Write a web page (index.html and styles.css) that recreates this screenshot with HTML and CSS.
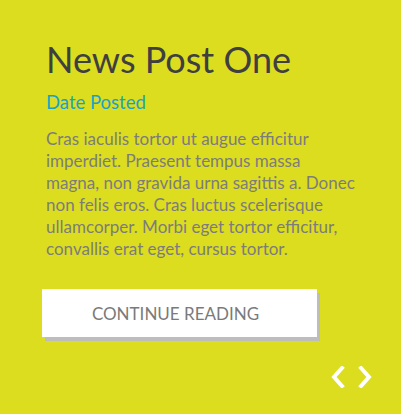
FILE: index.html
```html
<!DOCTYPE html>
<html>
<head>
<meta charset="utf-8">
<link rel="stylesheet" href="styles.css">
</head>
<body>
<div class="card">
  <h1 class="title">News Post One</h1>
  <div class="date">Date Posted</div>
  <p class="excerpt">Cras iaculis tortor ut augue efficitur imperdiet. Praesent tempus massa magna, non gravida urna sagittis a. Donec non felis eros. Cras luctus scelerisque ullamcorper. Morbi eget tortor efficitur, convallis erat eget, cursus tortor.</p>
  <a class="button" href="#">CONTINUE READING</a>
  <div class="nav">
    <svg class="chev" width="14" height="22" viewBox="0 0 14 22"><path d="M11 2 L3 11 L11 20" fill="none" stroke="#fff" stroke-width="4" stroke-linejoin="miter" stroke-linecap="square"/></svg>
    <svg class="chev" width="14" height="22" viewBox="0 0 14 22"><path d="M3 2 L11 11 L3 20" fill="none" stroke="#fff" stroke-width="4" stroke-linejoin="miter" stroke-linecap="square"/></svg>
  </div>
</div>
</body>
</html>
```
FILE: styles.css
```css
html, body {
  margin: 0;
  padding: 0;
  background: #dcdd1f;
}
.card {
  width: 401px;
  height: 414px;
  box-sizing: border-box;
  padding: 34px 0 0 46px;
  font-family: Lato, "Open Sans", sans-serif;
  display: flex;
  flex-direction: column;
  align-items: flex-start;
}
.title {
  margin: 0;
  font-size: 36px;
  font-weight: 400;
  line-height: 50px;
  color: #3f3f3f;
}
.date {
  margin-top: 6px;
  font-size: 18.5px;
  line-height: 24px;
  color: #17a3c8;
}
.excerpt {
  margin: 14px 0 0;
  width: 310px;
  font-size: 17px;
  line-height: 22px;
  color: #7c7c7c;
}
.button {
  margin: 29px 0 0 -4px;
  width: 275px;
  height: 48px;
  box-sizing: border-box;
  padding-right: 8px;
  background: #fff;
  box-shadow: 3px 4px 0 #bdbdbd;
  display: flex;
  align-items: center;
  justify-content: center;
  font-size: 17px;
  color: #7a7a7a;
  text-decoration: none;
}
.nav {
  align-self: flex-end;
  margin: 29px 29px 0 0;
  display: flex;
  gap: 13px;
}
.chev {
  display: block;
}
```
